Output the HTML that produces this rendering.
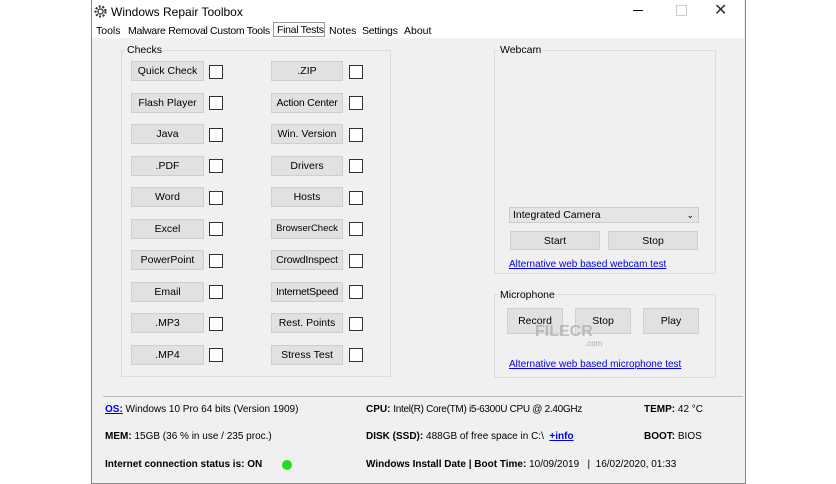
<!DOCTYPE html><html><head><style>
body{margin:0;width:836px;height:484px;background:#fff;position:relative;font-family:"Liberation Sans",sans-serif;font-size:10.5px;color:#000;overflow:hidden}
.a{position:absolute;white-space:nowrap}
.win{left:91px;top:0;width:653px;height:483px;border:1px solid #888;border-top:none;background:#f0f0f0}
.btn{position:absolute;background:#e1e1e1;border:1px solid #cfcfcf;text-align:center;box-sizing:border-box;line-height:18px;font-size:10.5px;white-space:nowrap}
.cb{position:absolute;width:12px;height:12px;border:1px solid #333;background:#fff}
.grp{position:absolute;border:1px solid #dcdcdc}
.lnk{color:#0000ee;text-decoration:underline}
.i{font-size:10px}
b{font-weight:bold}
</style></head><body>
<div class="a win"></div>
<div class="a" style="left:92px;top:0;width:652px;height:22px;background:#fff"></div>
<svg class="a" style="left:93px;top:4px" width="15" height="15" viewBox="0 0 15 15"><circle cx="7.5" cy="7.5" r="5" fill="none" stroke="#333" stroke-width="2.2" stroke-dasharray="2 1.6"/><circle cx="7.5" cy="7.5" r="2.5" fill="none" stroke="#333" stroke-width="1.3"/></svg>
<div class="a" style="left:111px;top:5px;font-size:12px">Windows Repair Toolbox</div>
<div class="a" style="left:633px;top:10px;width:10px;height:1px;background:#000"></div>
<div class="a" style="left:676px;top:5px;width:9px;height:9px;border:1px solid #ccc"></div>
<div class="a" style="left:714px;top:0px;font-size:16px;color:#333">✕</div>
<div class="a" style="left:92px;top:22px;width:652px;height:16px;background:#fff"></div>
<div class="a" style="left:96px;top:25px">Tools</div>
<div class="a" style="left:128px;top:25px;letter-spacing:-0.3px">Malware Removal</div>
<div class="a" style="left:210px;top:25px;letter-spacing:-0.3px">Custom Tools</div>
<div class="a" style="left:273px;top:22px;width:52px;height:15px;border:1px solid #999;background:#fff;padding-left:3px;box-sizing:border-box;line-height:14px;letter-spacing:-0.3px">Final Tests</div>
<div class="a" style="left:329px;top:25px">Notes</div>
<div class="a" style="left:362px;top:25px;letter-spacing:-0.3px">Settings</div>
<div class="a" style="left:404px;top:25px">About</div>
<div class="grp" style="left:121px;top:50px;width:268px;height:325px"></div>
<div class="a" style="left:125px;top:44px;background:#f0f0f0;padding:0 2px">Checks</div>
<div class="btn" style="left:131px;top:61px;width:73px;height:20px">Quick Check</div><div class="cb" style="left:209px;top:65px"></div>
<div class="btn" style="left:131px;top:93px;width:73px;height:20px">Flash Player</div><div class="cb" style="left:209px;top:96px"></div>
<div class="btn" style="left:131px;top:124px;width:73px;height:20px">Java</div><div class="cb" style="left:209px;top:128px"></div>
<div class="btn" style="left:131px;top:156px;width:73px;height:20px">.PDF</div><div class="cb" style="left:209px;top:159px"></div>
<div class="btn" style="left:131px;top:187px;width:73px;height:20px">Word</div><div class="cb" style="left:209px;top:191px"></div>
<div class="btn" style="left:131px;top:219px;width:73px;height:20px">Excel</div><div class="cb" style="left:209px;top:222px"></div>
<div class="btn" style="left:131px;top:250px;width:73px;height:20px">PowerPoint</div><div class="cb" style="left:209px;top:254px"></div>
<div class="btn" style="left:131px;top:282px;width:73px;height:20px">Email</div><div class="cb" style="left:209px;top:285px"></div>
<div class="btn" style="left:131px;top:313px;width:73px;height:20px">.MP3</div><div class="cb" style="left:209px;top:317px"></div>
<div class="btn" style="left:131px;top:345px;width:73px;height:20px">.MP4</div><div class="cb" style="left:209px;top:348px"></div>
<div class="btn" style="left:271px;top:61px;width:72px;height:20px">.ZIP</div><div class="cb" style="left:349px;top:65px"></div>
<div class="btn" style="left:271px;top:93px;width:72px;height:20px;letter-spacing:-0.2px">Action Center</div><div class="cb" style="left:349px;top:96px"></div>
<div class="btn" style="left:271px;top:124px;width:72px;height:20px">Win. Version</div><div class="cb" style="left:349px;top:128px"></div>
<div class="btn" style="left:271px;top:156px;width:72px;height:20px">Drivers</div><div class="cb" style="left:349px;top:159px"></div>
<div class="btn" style="left:271px;top:187px;width:72px;height:20px">Hosts</div><div class="cb" style="left:349px;top:191px"></div>
<div class="btn" style="left:271px;top:219px;width:72px;height:20px;font-size:9.5px">BrowserCheck</div><div class="cb" style="left:349px;top:222px"></div>
<div class="btn" style="left:271px;top:250px;width:72px;height:20px;letter-spacing:-0.2px">CrowdInspect</div><div class="cb" style="left:349px;top:254px"></div>
<div class="btn" style="left:271px;top:282px;width:72px;height:20px;letter-spacing:-0.3px">InternetSpeed</div><div class="cb" style="left:349px;top:285px"></div>
<div class="btn" style="left:271px;top:313px;width:72px;height:20px">Rest. Points</div><div class="cb" style="left:349px;top:317px"></div>
<div class="btn" style="left:271px;top:345px;width:72px;height:20px">Stress Test</div><div class="cb" style="left:349px;top:348px"></div>
<div class="grp" style="left:494px;top:50px;width:220px;height:222px"></div>
<div class="a" style="left:498px;top:44px;background:#f0f0f0;padding:0 2px">Webcam</div>
<div class="a" style="left:509px;top:207px;width:190px;height:16px;background:#e5e5e5;border:1px solid #ccc;box-sizing:border-box;padding-left:3px;line-height:14px">Integrated Camera<span style="position:absolute;right:4px;top:0;font-size:9px">&#8964;</span></div>
<div class="btn" style="left:510px;top:231px;width:90px;height:19px">Start</div>
<div class="btn" style="left:608px;top:231px;width:90px;height:19px">Stop</div>
<div class="a lnk i" style="left:509px;top:259px">Alternative web based webcam test</div>
<div class="grp" style="left:494px;top:294px;width:220px;height:82px"></div>
<div class="a" style="left:498px;top:289px;background:#f0f0f0;padding:0 2px">Microphone</div>
<div class="btn" style="left:507px;top:308px;width:56px;height:26px;line-height:24px">Record</div>
<div class="btn" style="left:575px;top:308px;width:56px;height:26px;line-height:24px">Stop</div>
<div class="btn" style="left:643px;top:308px;width:56px;height:26px;line-height:24px">Play</div>
<div class="a" style="left:535px;top:323px;font-size:16px;font-weight:bold;color:#aaa;opacity:.7">FILECR</div>
<div class="a" style="left:585px;top:339px;font-size:8px;color:#aaa">.com</div>
<div class="a lnk i" style="left:509px;top:359px">Alternative web based microphone test</div>
<div class="a" style="left:103px;top:396px;width:640px;height:1px;background:#bbb"></div>
<div class="a i" style="left:105px;top:404px"><span class="lnk"><b>OS:</b></span> Windows 10 Pro 64 bits (Version 1909)</div>
<div class="a i" style="left:366px;top:404px"><b>CPU:</b> <span style="letter-spacing:-0.3px">Intel(R) Core(TM) i5-6300U CPU @ 2.40GHz</span></div>
<div class="a i" style="left:644px;top:404px"><b>TEMP:</b> 42 °C</div>
<div class="a i" style="left:105px;top:431px"><b>MEM:</b> 15GB (36 % in use / 235 proc.)</div>
<div class="a i" style="left:366px;top:431px"><b>DISK (SSD):</b> 488GB of free space in C:\ &nbsp;<span class="lnk"><b>+info</b></span></div>
<div class="a i" style="left:644px;top:431px"><b>BOOT:</b> BIOS</div>
<div class="a i" style="left:105px;top:459px"><b>Internet connection status is: ON</b></div>
<div class="a" style="left:282px;top:460px;width:10px;height:10px;border-radius:50%;background:#22dd22"></div>
<div class="a i" style="left:366px;top:459px"><b>Windows Install Date | Boot Time:</b> 10/09/2019 &nbsp; | &nbsp;16/02/2020, 01:33</div>
</body></html>
